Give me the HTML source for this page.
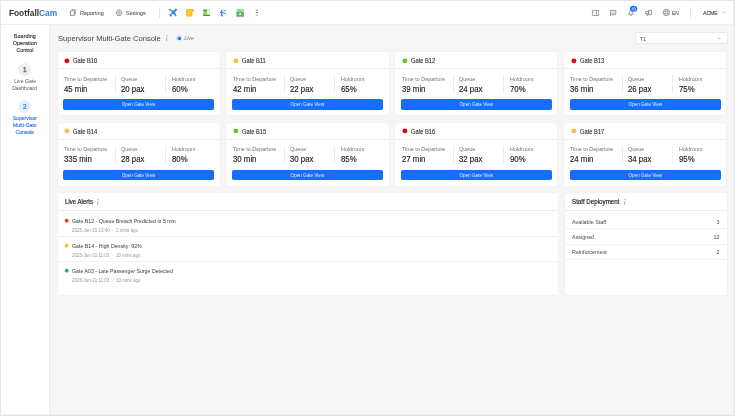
<!DOCTYPE html>
<html><head><meta charset="utf-8"><style>
html,body{margin:0;padding:0;width:735px;height:416px;overflow:hidden;background:#f6f6f6}
body{position:relative;font-family:"Liberation Sans",sans-serif}
#w{position:absolute;left:0;top:0;width:735px;height:416px;will-change:transform}
.t{position:absolute;white-space:nowrap}
.r{position:absolute;display:block}
</style></head><body><div id="w">
<div class="r" style="left:0.00px;top:0.00px;width:735.00px;height:416.00px;background:#f6f6f6"></div>
<div class="r" style="left:0.00px;top:0.00px;width:735.00px;height:25.00px;background:#fff;border-bottom:1px solid #eeeeee;box-sizing:border-box"></div>
<div class="r" style="left:0.00px;top:25.00px;width:50.00px;height:391.00px;background:#fff;border-right:1px solid #ededed;box-sizing:border-box"></div>
<div class="t" style="left:8.90px;top:9.32px;font-size:8.36px;line-height:8.36px;font-weight:700;color:#333;">Footfall<span style="color:#3b78de">Cam</span></div>
<svg class="r" style="left:0;top:0;width:735px;height:24px" viewBox="0 0 735 24"><path d="M71.6 9.7 H75.3 V14.6" fill="none" stroke="#7a7a7a" stroke-width="0.75"/><rect x="70.4" y="10.9" width="4.0" height="4.7" rx="0.5" fill="none" stroke="#7a7a7a" stroke-width="0.8"/><path d="M117.6 10.1 L120.6 10.1 L122.0 12.9 L120.6 15.6 L117.6 15.6 L116.2 12.9 Z" fill="none" stroke="#7a7a7a" stroke-width="0.75" stroke-linejoin="round"/><circle cx="119.1" cy="12.9" r="1.2" fill="none" stroke="#7a7a7a" stroke-width="0.7"/><path d="M172.9 12.8 L176.0 9.6" stroke="#3d7ef2" stroke-width="2.0" stroke-linecap="round"/><path d="M172.9 12.8 L170.6 15.2" stroke="#3d7ef2" stroke-width="1.5" stroke-linecap="round"/><path d="M169.7 14.6 L171.2 16.1" stroke="#3d7ef2" stroke-width="1.1" stroke-linecap="round"/><path d="M169.8 9.6 L172.6 11.2 L175.9 15.9 L174.2 12.4 Z" fill="#3d7ef2" stroke="#3d7ef2" stroke-width="1.3" stroke-linejoin="round"/><rect x="186.0" y="8.9" width="6.5" height="7.7" rx="0.5" fill="#fbbd1f"/><rect x="192.3" y="9.0" width="1.2" height="2.8" fill="#f7930f"/><path d="M187.6 11.6 L188.8 11.0 L189.8 11.5 L191.0 10.9 M187.6 14.1 L188.8 13.4 L189.8 13.9 L191.0 13.2" fill="none" stroke="#fde6a6" stroke-width="0.75"/><rect x="203.1" y="9.3" width="6.9" height="6.7" rx="0.4" fill="#9fd06a"/><rect x="207.0" y="9.3" width="3.0" height="5.0" fill="#dff0cf"/><rect x="203.6" y="9.9" width="3.4" height="1.3" fill="#2aa24c"/><rect x="203.1" y="14.9" width="6.9" height="1.1" fill="#28a84f"/><rect x="207.6" y="12.0" width="1.6" height="2.2" fill="#f5fbef"/><rect x="222.2" y="8.7" width="4.8" height="7.0" fill="#eeeeee"/><path d="M221.6 10.0 V15.3 Q221.6 15.8 222.3 15.8 H223.0" fill="none" stroke="#3d7ef2" stroke-width="1.3"/><path d="M220.0 12.4 H223.3" fill="none" stroke="#3d7ef2" stroke-width="1.2"/><path d="M223.4 13.3 H225.6" fill="none" stroke="#3d7ef2" stroke-width="0.9"/><path d="M223.4 9.9 H225.6 L224.5 11.3 Z" fill="#42b35f"/><rect x="236.4" y="10.4" width="7.5" height="6.4" rx="0.6" fill="#55bb57"/><path d="M236.8 10.0 L238.4 9.1 L240.1 10.0 L241.8 9.1 L243.5 10.0" fill="none" stroke="#4cb64f" stroke-width="0.8"/><rect x="236.4" y="11.3" width="7.5" height="0.5" fill="#dff1df"/><rect x="239.3" y="13.1" width="1.8" height="1.8" fill="#ffffff"/><rect x="255.8" y="9.8" width="2.3" height="1.0" fill="#8a8a8a"/><rect x="255.8" y="12.0" width="2.3" height="1.0" fill="#8a8a8a"/><rect x="255.8" y="14.7" width="2.3" height="1.0" fill="#b0b0b0"/><rect x="592.4" y="10.3" width="6.2" height="5.2" rx="0.5" fill="none" stroke="#7a7a7a" stroke-width="0.7"/><path d="M596.6 10.3 V15.4 M593.2 12.3 H594.1" fill="none" stroke="#7a7a7a" stroke-width="0.7"/><path d="M610.5 10.4 H615.8 V14.7 H611.3 L610.5 15.7 Z" fill="none" stroke="#7a7a7a" stroke-width="0.7" stroke-linejoin="round"/><path d="M611.2 12.0 H615.1 M611.2 13.6 H615.1" fill="none" stroke="#7a7a7a" stroke-width="0.45"/><path d="M628.4 14.3 C629.3 13.5 629.2 12.4 629.3 11.6 C629.5 10.4 632.2 10.4 632.5 11.6 C632.6 12.4 632.5 13.5 633.4 14.3 Z" fill="none" stroke="#7a7a7a" stroke-width="0.7" stroke-linejoin="round"/><path d="M630.3 15.3 H631.5" fill="none" stroke="#666" stroke-width="0.8"/><ellipse cx="633.6" cy="8.8" rx="3.75" ry="3.05" fill="#1f6ef5"/><path d="M632.3 7.3 V10.3 M634.6 7.4 C636.0 7.4 636.0 10.2 634.6 10.2 C633.3 10.2 633.3 7.4 634.6 7.4" fill="none" stroke="#d6e4ff" stroke-width="0.7"/><path d="M645.6 11.3 H648.7 V13.6 H645.6 Z" fill="none" stroke="#7a7a7a" stroke-width="0.75" stroke-linejoin="round"/><rect x="648.7" y="10.3" width="2.8" height="4.4" rx="0.3" fill="none" stroke="#7a7a7a" stroke-width="0.75"/><path d="M646.4 13.7 L646.9 15.4 H647.9 V13.7" fill="none" stroke="#7a7a7a" stroke-width="0.65" stroke-linejoin="round"/><circle cx="666.4" cy="12.5" r="3.2" fill="none" stroke="#7a7a7a" stroke-width="0.7"/><ellipse cx="666.4" cy="12.5" rx="1.3" ry="3.2" fill="none" stroke="#7a7a7a" stroke-width="0.55"/><path d="M663.3 11.5 H669.5 M663.3 13.5 H669.5" fill="none" stroke="#7a7a7a" stroke-width="0.55"/><path d="M722.2 11.6 L723.6 13.0 L725.0 11.6" fill="none" stroke="#8a8a8a" stroke-width="0.6"/></svg>
<div class="t" style="left:80.10px;top:10.59px;font-size:5.80px;line-height:5.80px;font-weight:400;color:#555;transform:scaleX(0.945);transform-origin:left center;-webkit-text-stroke:0.06px currentColor;">Reporting</div>
<div class="t" style="left:126.00px;top:10.59px;font-size:5.80px;line-height:5.80px;font-weight:400;color:#555;transform:scaleX(0.940);transform-origin:left center;-webkit-text-stroke:0.06px currentColor;">Settings</div>
<div class="r" style="left:158.60px;top:6.70px;width:0.70px;height:11.60px;background:#e6e6e6"></div>
<div class="t" style="left:672.00px;top:11.10px;font-size:5.20px;line-height:5.20px;font-weight:400;color:#444;transform:scaleX(0.930);transform-origin:left center;-webkit-text-stroke:0.04px currentColor;">EN</div>
<div class="r" style="left:690.40px;top:6.90px;width:0.70px;height:11.40px;background:#e6e6e6"></div>
<div class="t" style="left:703.10px;top:11.04px;font-size:5.50px;line-height:5.50px;font-weight:400;color:#333;transform:scaleX(0.930);transform-origin:left center;-webkit-text-stroke:0.08px currentColor;">ACME</div>
<div class="t" style="left:-75.15px;width:200px;text-align:center;top:33.84px;font-size:5.50px;line-height:5.50px;font-weight:400;color:#3a3a3a;-webkit-text-stroke:0.15px currentColor;">Boarding</div>
<div class="t" style="left:-75.15px;width:200px;text-align:center;top:40.74px;font-size:5.50px;line-height:5.50px;font-weight:400;color:#3a3a3a;-webkit-text-stroke:0.15px currentColor;">Operation</div>
<div class="t" style="left:-75.00px;width:200px;text-align:center;top:47.64px;font-size:5.50px;line-height:5.50px;font-weight:400;color:#3a3a3a;transform:scaleX(0.950);transform-origin:center center;-webkit-text-stroke:0.15px currentColor;">Control</div>
<div class="r" style="left:18.30px;top:62.90px;width:13.00px;height:13.00px;background:#efefef;border-radius:50%"></div>
<div class="t" style="left:-75.20px;width:200px;text-align:center;top:66.98px;font-size:6.40px;line-height:6.40px;font-weight:400;color:#555;-webkit-text-stroke:0.25px currentColor;">1</div>
<div class="t" style="left:-74.95px;width:200px;text-align:center;top:79.08px;font-size:5.10px;line-height:5.10px;font-weight:400;color:#555;">Live Gate</div>
<div class="t" style="left:-75.35px;width:200px;text-align:center;top:85.78px;font-size:5.10px;line-height:5.10px;font-weight:400;color:#555;">Dashboard</div>
<div class="r" style="left:18.25px;top:99.90px;width:13.00px;height:13.00px;background:#e6effe;border-radius:50%"></div>
<div class="t" style="left:-75.25px;width:200px;text-align:center;top:103.88px;font-size:6.40px;line-height:6.40px;font-weight:400;color:#2b6ef0;-webkit-text-stroke:0.2px currentColor;">2</div>
<div class="t" style="left:-75.15px;width:200px;text-align:center;top:116.28px;font-size:5.10px;line-height:5.10px;font-weight:400;color:#2b6ef0;-webkit-text-stroke:0.12px currentColor;">Supervisor</div>
<div class="t" style="left:-75.15px;width:200px;text-align:center;top:123.08px;font-size:5.10px;line-height:5.10px;font-weight:400;color:#2b6ef0;-webkit-text-stroke:0.12px currentColor;">Multi-Gate</div>
<div class="t" style="left:-75.20px;width:200px;text-align:center;top:129.78px;font-size:5.10px;line-height:5.10px;font-weight:400;color:#2b6ef0;-webkit-text-stroke:0.12px currentColor;">Console</div>
<div class="t" style="left:57.70px;top:34.83px;font-size:8.00px;line-height:8.00px;font-weight:400;color:#424242;transform:scaleX(0.943);transform-origin:left center;">Supervisor Multi-Gate Console</div>
<svg class="r" style="left:163.50px;top:33.60px;width:6.00px;height:8.00px" viewBox="0 0 6 8"><circle cx="3.00" cy="1.70" r="0.70" fill="#adadad"/><path d="M2.80 3.50 L2.40 7.10" stroke="#adadad" stroke-width="1.00" fill="none"/></svg>
<div class="r" style="left:176.00px;top:34.95px;width:6.20px;height:6.20px;background:radial-gradient(circle, rgba(15,96,255,0.35) 0%, rgba(15,96,255,0.12) 60%, rgba(15,96,255,0) 100%);border-radius:50%"></div>
<div class="r" style="left:177.55px;top:36.50px;width:3.10px;height:3.10px;background:#0f60ff;border-radius:50%"></div>
<div class="t" style="left:184.20px;top:36.21px;font-size:5.30px;line-height:5.30px;font-weight:400;color:#7d7d7d;font-style:italic">Live</div>
<div class="r" style="left:635.00px;top:32.00px;width:93.00px;height:12.00px;background:#fff;border-radius:2px;border:1px solid #e9e9e9;box-sizing:border-box"></div>
<div class="t" style="left:640.10px;top:36.96px;font-size:5.60px;line-height:5.60px;font-weight:400;color:#555;transform:scaleX(0.900);transform-origin:left center;-webkit-text-stroke:0.08px currentColor;">T1</div>
<svg class="r" style="left:717.40px;top:36.60px;width:4.20px;height:3.00px" viewBox="0 0 4.2 3.0"><path d="M0.6 0.7 L2.1 2.2 L3.6 0.7" fill="none" stroke="#8f8f8f" stroke-width="0.6"/></svg>
<div class="r" style="left:57.50px;top:52.20px;width:162.10px;height:63.20px;background:#fff;border-radius:2.2px;box-shadow:0 0 0 0.5px rgba(0,0,0,0.035)"></div>
<div class="r" style="left:57.50px;top:68.10px;width:162.10px;height:0.60px;background:#ededed"></div>
<svg class="r" style="left:62.30px;top:55.60px;width:9.80px;height:9.80px" viewBox="0 0 9.80 9.80"><circle cx="4.90" cy="4.90" r="2.45" fill="#e3001b"/></svg>
<div class="t" style="left:72.70px;top:58.01px;font-size:6.60px;line-height:6.60px;font-weight:400;color:#2a2a2a;transform:scaleX(0.870);transform-origin:left center;-webkit-text-stroke:0.1px currentColor;">Gate B10</div>
<div class="t" style="left:63.60px;top:76.59px;font-size:5.80px;line-height:5.80px;font-weight:400;color:#737373;transform:scaleX(0.930);transform-origin:left center;">Time to Departure</div>
<div class="t" style="left:63.60px;top:85.66px;font-size:8.20px;line-height:8.20px;font-weight:400;color:#262626;transform:scaleX(0.955);transform-origin:left center;-webkit-text-stroke:0.17px currentColor;">45 min</div>
<div class="r" style="left:114.70px;top:75.40px;width:0.70px;height:17.40px;background:#ededed"></div>
<div class="t" style="left:121.00px;top:76.59px;font-size:5.80px;line-height:5.80px;font-weight:400;color:#737373;transform:scaleX(0.930);transform-origin:left center;">Queue</div>
<div class="t" style="left:121.00px;top:85.66px;font-size:8.20px;line-height:8.20px;font-weight:400;color:#262626;transform:scaleX(0.955);transform-origin:left center;-webkit-text-stroke:0.17px currentColor;">20 pax</div>
<div class="r" style="left:165.20px;top:75.40px;width:0.70px;height:17.40px;background:#ededed"></div>
<div class="t" style="left:172.00px;top:76.59px;font-size:5.80px;line-height:5.80px;font-weight:400;color:#737373;transform:scaleX(0.930);transform-origin:left center;">Holdroom</div>
<div class="t" style="left:172.00px;top:85.66px;font-size:8.20px;line-height:8.20px;font-weight:400;color:#262626;transform:scaleX(0.955);transform-origin:left center;-webkit-text-stroke:0.17px currentColor;">60%</div>
<div class="r" style="left:63.20px;top:99.20px;width:150.50px;height:10.60px;background:#166dff;border-radius:1.8px"></div>
<div class="t" style="left:38.45px;width:200px;text-align:center;top:103.11px;font-size:4.60px;line-height:4.60px;font-weight:400;color:rgba(255,255,255,0.88);">Open Gate View</div>
<div class="r" style="left:226.45px;top:52.20px;width:162.10px;height:63.20px;background:#fff;border-radius:2.2px;box-shadow:0 0 0 0.5px rgba(0,0,0,0.035)"></div>
<div class="r" style="left:226.45px;top:68.10px;width:162.10px;height:0.60px;background:#ededed"></div>
<svg class="r" style="left:231.25px;top:55.60px;width:9.80px;height:9.80px" viewBox="0 0 9.80 9.80"><circle cx="4.90" cy="4.90" r="2.45" fill="#f8c13b"/></svg>
<div class="t" style="left:241.65px;top:58.01px;font-size:6.60px;line-height:6.60px;font-weight:400;color:#2a2a2a;transform:scaleX(0.870);transform-origin:left center;-webkit-text-stroke:0.1px currentColor;">Gate B11</div>
<div class="t" style="left:232.55px;top:76.59px;font-size:5.80px;line-height:5.80px;font-weight:400;color:#737373;transform:scaleX(0.930);transform-origin:left center;">Time to Departure</div>
<div class="t" style="left:232.55px;top:85.66px;font-size:8.20px;line-height:8.20px;font-weight:400;color:#262626;transform:scaleX(0.955);transform-origin:left center;-webkit-text-stroke:0.17px currentColor;">42 min</div>
<div class="r" style="left:283.65px;top:75.40px;width:0.70px;height:17.40px;background:#ededed"></div>
<div class="t" style="left:289.95px;top:76.59px;font-size:5.80px;line-height:5.80px;font-weight:400;color:#737373;transform:scaleX(0.930);transform-origin:left center;">Queue</div>
<div class="t" style="left:289.95px;top:85.66px;font-size:8.20px;line-height:8.20px;font-weight:400;color:#262626;transform:scaleX(0.955);transform-origin:left center;-webkit-text-stroke:0.17px currentColor;">22 pax</div>
<div class="r" style="left:334.15px;top:75.40px;width:0.70px;height:17.40px;background:#ededed"></div>
<div class="t" style="left:340.95px;top:76.59px;font-size:5.80px;line-height:5.80px;font-weight:400;color:#737373;transform:scaleX(0.930);transform-origin:left center;">Holdroom</div>
<div class="t" style="left:340.95px;top:85.66px;font-size:8.20px;line-height:8.20px;font-weight:400;color:#262626;transform:scaleX(0.955);transform-origin:left center;-webkit-text-stroke:0.17px currentColor;">65%</div>
<div class="r" style="left:232.15px;top:99.20px;width:150.50px;height:10.60px;background:#166dff;border-radius:1.8px"></div>
<div class="t" style="left:207.40px;width:200px;text-align:center;top:103.11px;font-size:4.60px;line-height:4.60px;font-weight:400;color:rgba(255,255,255,0.88);">Open Gate View</div>
<div class="r" style="left:395.40px;top:52.20px;width:162.10px;height:63.20px;background:#fff;border-radius:2.2px;box-shadow:0 0 0 0.5px rgba(0,0,0,0.035)"></div>
<div class="r" style="left:395.40px;top:68.10px;width:162.10px;height:0.60px;background:#ededed"></div>
<svg class="r" style="left:400.20px;top:55.60px;width:9.80px;height:9.80px" viewBox="0 0 9.80 9.80"><circle cx="4.90" cy="4.90" r="2.45" fill="#63c81f"/></svg>
<div class="t" style="left:410.60px;top:58.01px;font-size:6.60px;line-height:6.60px;font-weight:400;color:#2a2a2a;transform:scaleX(0.870);transform-origin:left center;-webkit-text-stroke:0.1px currentColor;">Gate B12</div>
<div class="t" style="left:401.50px;top:76.59px;font-size:5.80px;line-height:5.80px;font-weight:400;color:#737373;transform:scaleX(0.930);transform-origin:left center;">Time to Departure</div>
<div class="t" style="left:401.50px;top:85.66px;font-size:8.20px;line-height:8.20px;font-weight:400;color:#262626;transform:scaleX(0.955);transform-origin:left center;-webkit-text-stroke:0.17px currentColor;">39 min</div>
<div class="r" style="left:452.60px;top:75.40px;width:0.70px;height:17.40px;background:#ededed"></div>
<div class="t" style="left:458.90px;top:76.59px;font-size:5.80px;line-height:5.80px;font-weight:400;color:#737373;transform:scaleX(0.930);transform-origin:left center;">Queue</div>
<div class="t" style="left:458.90px;top:85.66px;font-size:8.20px;line-height:8.20px;font-weight:400;color:#262626;transform:scaleX(0.955);transform-origin:left center;-webkit-text-stroke:0.17px currentColor;">24 pax</div>
<div class="r" style="left:503.10px;top:75.40px;width:0.70px;height:17.40px;background:#ededed"></div>
<div class="t" style="left:509.90px;top:76.59px;font-size:5.80px;line-height:5.80px;font-weight:400;color:#737373;transform:scaleX(0.930);transform-origin:left center;">Holdroom</div>
<div class="t" style="left:509.90px;top:85.66px;font-size:8.20px;line-height:8.20px;font-weight:400;color:#262626;transform:scaleX(0.955);transform-origin:left center;-webkit-text-stroke:0.17px currentColor;">70%</div>
<div class="r" style="left:401.10px;top:99.20px;width:150.50px;height:10.60px;background:#166dff;border-radius:1.8px"></div>
<div class="t" style="left:376.35px;width:200px;text-align:center;top:103.11px;font-size:4.60px;line-height:4.60px;font-weight:400;color:rgba(255,255,255,0.88);">Open Gate View</div>
<div class="r" style="left:564.35px;top:52.20px;width:162.10px;height:63.20px;background:#fff;border-radius:2.2px;box-shadow:0 0 0 0.5px rgba(0,0,0,0.035)"></div>
<div class="r" style="left:564.35px;top:68.10px;width:162.10px;height:0.60px;background:#ededed"></div>
<svg class="r" style="left:569.15px;top:55.60px;width:9.80px;height:9.80px" viewBox="0 0 9.80 9.80"><circle cx="4.90" cy="4.90" r="2.45" fill="#e3001b"/></svg>
<div class="t" style="left:579.55px;top:58.01px;font-size:6.60px;line-height:6.60px;font-weight:400;color:#2a2a2a;transform:scaleX(0.870);transform-origin:left center;-webkit-text-stroke:0.1px currentColor;">Gate B13</div>
<div class="t" style="left:570.45px;top:76.59px;font-size:5.80px;line-height:5.80px;font-weight:400;color:#737373;transform:scaleX(0.930);transform-origin:left center;">Time to Departure</div>
<div class="t" style="left:570.45px;top:85.66px;font-size:8.20px;line-height:8.20px;font-weight:400;color:#262626;transform:scaleX(0.955);transform-origin:left center;-webkit-text-stroke:0.17px currentColor;">36 min</div>
<div class="r" style="left:621.55px;top:75.40px;width:0.70px;height:17.40px;background:#ededed"></div>
<div class="t" style="left:627.85px;top:76.59px;font-size:5.80px;line-height:5.80px;font-weight:400;color:#737373;transform:scaleX(0.930);transform-origin:left center;">Queue</div>
<div class="t" style="left:627.85px;top:85.66px;font-size:8.20px;line-height:8.20px;font-weight:400;color:#262626;transform:scaleX(0.955);transform-origin:left center;-webkit-text-stroke:0.17px currentColor;">26 pax</div>
<div class="r" style="left:672.05px;top:75.40px;width:0.70px;height:17.40px;background:#ededed"></div>
<div class="t" style="left:678.85px;top:76.59px;font-size:5.80px;line-height:5.80px;font-weight:400;color:#737373;transform:scaleX(0.930);transform-origin:left center;">Holdroom</div>
<div class="t" style="left:678.85px;top:85.66px;font-size:8.20px;line-height:8.20px;font-weight:400;color:#262626;transform:scaleX(0.955);transform-origin:left center;-webkit-text-stroke:0.17px currentColor;">75%</div>
<div class="r" style="left:570.05px;top:99.20px;width:150.50px;height:10.60px;background:#166dff;border-radius:1.8px"></div>
<div class="t" style="left:545.30px;width:200px;text-align:center;top:103.11px;font-size:4.60px;line-height:4.60px;font-weight:400;color:rgba(255,255,255,0.88);">Open Gate View</div>
<div class="r" style="left:57.50px;top:122.80px;width:162.10px;height:63.20px;background:#fff;border-radius:2.2px;box-shadow:0 0 0 0.5px rgba(0,0,0,0.035)"></div>
<div class="r" style="left:57.50px;top:138.70px;width:162.10px;height:0.60px;background:#ededed"></div>
<svg class="r" style="left:62.30px;top:126.20px;width:9.80px;height:9.80px" viewBox="0 0 9.80 9.80"><circle cx="4.90" cy="4.90" r="2.45" fill="#f8c13b"/></svg>
<div class="t" style="left:72.70px;top:128.61px;font-size:6.60px;line-height:6.60px;font-weight:400;color:#2a2a2a;transform:scaleX(0.870);transform-origin:left center;-webkit-text-stroke:0.1px currentColor;">Gate B14</div>
<div class="t" style="left:63.60px;top:147.19px;font-size:5.80px;line-height:5.80px;font-weight:400;color:#737373;transform:scaleX(0.930);transform-origin:left center;">Time to Departure</div>
<div class="t" style="left:63.60px;top:156.26px;font-size:8.20px;line-height:8.20px;font-weight:400;color:#262626;transform:scaleX(0.955);transform-origin:left center;-webkit-text-stroke:0.17px currentColor;">335 min</div>
<div class="r" style="left:114.70px;top:146.00px;width:0.70px;height:17.40px;background:#ededed"></div>
<div class="t" style="left:121.00px;top:147.19px;font-size:5.80px;line-height:5.80px;font-weight:400;color:#737373;transform:scaleX(0.930);transform-origin:left center;">Queue</div>
<div class="t" style="left:121.00px;top:156.26px;font-size:8.20px;line-height:8.20px;font-weight:400;color:#262626;transform:scaleX(0.955);transform-origin:left center;-webkit-text-stroke:0.17px currentColor;">28 pax</div>
<div class="r" style="left:165.20px;top:146.00px;width:0.70px;height:17.40px;background:#ededed"></div>
<div class="t" style="left:172.00px;top:147.19px;font-size:5.80px;line-height:5.80px;font-weight:400;color:#737373;transform:scaleX(0.930);transform-origin:left center;">Holdroom</div>
<div class="t" style="left:172.00px;top:156.26px;font-size:8.20px;line-height:8.20px;font-weight:400;color:#262626;transform:scaleX(0.955);transform-origin:left center;-webkit-text-stroke:0.17px currentColor;">80%</div>
<div class="r" style="left:63.20px;top:169.80px;width:150.50px;height:10.60px;background:#166dff;border-radius:1.8px"></div>
<div class="t" style="left:38.45px;width:200px;text-align:center;top:173.71px;font-size:4.60px;line-height:4.60px;font-weight:400;color:rgba(255,255,255,0.88);">Open Gate View</div>
<div class="r" style="left:226.45px;top:122.80px;width:162.10px;height:63.20px;background:#fff;border-radius:2.2px;box-shadow:0 0 0 0.5px rgba(0,0,0,0.035)"></div>
<div class="r" style="left:226.45px;top:138.70px;width:162.10px;height:0.60px;background:#ededed"></div>
<svg class="r" style="left:231.25px;top:126.20px;width:9.80px;height:9.80px" viewBox="0 0 9.80 9.80"><circle cx="4.90" cy="4.90" r="2.45" fill="#63c81f"/></svg>
<div class="t" style="left:241.65px;top:128.61px;font-size:6.60px;line-height:6.60px;font-weight:400;color:#2a2a2a;transform:scaleX(0.870);transform-origin:left center;-webkit-text-stroke:0.1px currentColor;">Gate B15</div>
<div class="t" style="left:232.55px;top:147.19px;font-size:5.80px;line-height:5.80px;font-weight:400;color:#737373;transform:scaleX(0.930);transform-origin:left center;">Time to Departure</div>
<div class="t" style="left:232.55px;top:156.26px;font-size:8.20px;line-height:8.20px;font-weight:400;color:#262626;transform:scaleX(0.955);transform-origin:left center;-webkit-text-stroke:0.17px currentColor;">30 min</div>
<div class="r" style="left:283.65px;top:146.00px;width:0.70px;height:17.40px;background:#ededed"></div>
<div class="t" style="left:289.95px;top:147.19px;font-size:5.80px;line-height:5.80px;font-weight:400;color:#737373;transform:scaleX(0.930);transform-origin:left center;">Queue</div>
<div class="t" style="left:289.95px;top:156.26px;font-size:8.20px;line-height:8.20px;font-weight:400;color:#262626;transform:scaleX(0.955);transform-origin:left center;-webkit-text-stroke:0.17px currentColor;">30 pax</div>
<div class="r" style="left:334.15px;top:146.00px;width:0.70px;height:17.40px;background:#ededed"></div>
<div class="t" style="left:340.95px;top:147.19px;font-size:5.80px;line-height:5.80px;font-weight:400;color:#737373;transform:scaleX(0.930);transform-origin:left center;">Holdroom</div>
<div class="t" style="left:340.95px;top:156.26px;font-size:8.20px;line-height:8.20px;font-weight:400;color:#262626;transform:scaleX(0.955);transform-origin:left center;-webkit-text-stroke:0.17px currentColor;">85%</div>
<div class="r" style="left:232.15px;top:169.80px;width:150.50px;height:10.60px;background:#166dff;border-radius:1.8px"></div>
<div class="t" style="left:207.40px;width:200px;text-align:center;top:173.71px;font-size:4.60px;line-height:4.60px;font-weight:400;color:rgba(255,255,255,0.88);">Open Gate View</div>
<div class="r" style="left:395.40px;top:122.80px;width:162.10px;height:63.20px;background:#fff;border-radius:2.2px;box-shadow:0 0 0 0.5px rgba(0,0,0,0.035)"></div>
<div class="r" style="left:395.40px;top:138.70px;width:162.10px;height:0.60px;background:#ededed"></div>
<svg class="r" style="left:400.20px;top:126.20px;width:9.80px;height:9.80px" viewBox="0 0 9.80 9.80"><circle cx="4.90" cy="4.90" r="2.45" fill="#e3001b"/></svg>
<div class="t" style="left:410.60px;top:128.61px;font-size:6.60px;line-height:6.60px;font-weight:400;color:#2a2a2a;transform:scaleX(0.870);transform-origin:left center;-webkit-text-stroke:0.1px currentColor;">Gate B16</div>
<div class="t" style="left:401.50px;top:147.19px;font-size:5.80px;line-height:5.80px;font-weight:400;color:#737373;transform:scaleX(0.930);transform-origin:left center;">Time to Departure</div>
<div class="t" style="left:401.50px;top:156.26px;font-size:8.20px;line-height:8.20px;font-weight:400;color:#262626;transform:scaleX(0.955);transform-origin:left center;-webkit-text-stroke:0.17px currentColor;">27 min</div>
<div class="r" style="left:452.60px;top:146.00px;width:0.70px;height:17.40px;background:#ededed"></div>
<div class="t" style="left:458.90px;top:147.19px;font-size:5.80px;line-height:5.80px;font-weight:400;color:#737373;transform:scaleX(0.930);transform-origin:left center;">Queue</div>
<div class="t" style="left:458.90px;top:156.26px;font-size:8.20px;line-height:8.20px;font-weight:400;color:#262626;transform:scaleX(0.955);transform-origin:left center;-webkit-text-stroke:0.17px currentColor;">32 pax</div>
<div class="r" style="left:503.10px;top:146.00px;width:0.70px;height:17.40px;background:#ededed"></div>
<div class="t" style="left:509.90px;top:147.19px;font-size:5.80px;line-height:5.80px;font-weight:400;color:#737373;transform:scaleX(0.930);transform-origin:left center;">Holdroom</div>
<div class="t" style="left:509.90px;top:156.26px;font-size:8.20px;line-height:8.20px;font-weight:400;color:#262626;transform:scaleX(0.955);transform-origin:left center;-webkit-text-stroke:0.17px currentColor;">90%</div>
<div class="r" style="left:401.10px;top:169.80px;width:150.50px;height:10.60px;background:#166dff;border-radius:1.8px"></div>
<div class="t" style="left:376.35px;width:200px;text-align:center;top:173.71px;font-size:4.60px;line-height:4.60px;font-weight:400;color:rgba(255,255,255,0.88);">Open Gate View</div>
<div class="r" style="left:564.35px;top:122.80px;width:162.10px;height:63.20px;background:#fff;border-radius:2.2px;box-shadow:0 0 0 0.5px rgba(0,0,0,0.035)"></div>
<div class="r" style="left:564.35px;top:138.70px;width:162.10px;height:0.60px;background:#ededed"></div>
<svg class="r" style="left:569.15px;top:126.20px;width:9.80px;height:9.80px" viewBox="0 0 9.80 9.80"><circle cx="4.90" cy="4.90" r="2.45" fill="#f8c13b"/></svg>
<div class="t" style="left:579.55px;top:128.61px;font-size:6.60px;line-height:6.60px;font-weight:400;color:#2a2a2a;transform:scaleX(0.870);transform-origin:left center;-webkit-text-stroke:0.1px currentColor;">Gate B17</div>
<div class="t" style="left:570.45px;top:147.19px;font-size:5.80px;line-height:5.80px;font-weight:400;color:#737373;transform:scaleX(0.930);transform-origin:left center;">Time to Departure</div>
<div class="t" style="left:570.45px;top:156.26px;font-size:8.20px;line-height:8.20px;font-weight:400;color:#262626;transform:scaleX(0.955);transform-origin:left center;-webkit-text-stroke:0.17px currentColor;">24 min</div>
<div class="r" style="left:621.55px;top:146.00px;width:0.70px;height:17.40px;background:#ededed"></div>
<div class="t" style="left:627.85px;top:147.19px;font-size:5.80px;line-height:5.80px;font-weight:400;color:#737373;transform:scaleX(0.930);transform-origin:left center;">Queue</div>
<div class="t" style="left:627.85px;top:156.26px;font-size:8.20px;line-height:8.20px;font-weight:400;color:#262626;transform:scaleX(0.955);transform-origin:left center;-webkit-text-stroke:0.17px currentColor;">34 pax</div>
<div class="r" style="left:672.05px;top:146.00px;width:0.70px;height:17.40px;background:#ededed"></div>
<div class="t" style="left:678.85px;top:147.19px;font-size:5.80px;line-height:5.80px;font-weight:400;color:#737373;transform:scaleX(0.930);transform-origin:left center;">Holdroom</div>
<div class="t" style="left:678.85px;top:156.26px;font-size:8.20px;line-height:8.20px;font-weight:400;color:#262626;transform:scaleX(0.955);transform-origin:left center;-webkit-text-stroke:0.17px currentColor;">95%</div>
<div class="r" style="left:570.05px;top:169.80px;width:150.50px;height:10.60px;background:#166dff;border-radius:1.8px"></div>
<div class="t" style="left:545.30px;width:200px;text-align:center;top:173.71px;font-size:4.60px;line-height:4.60px;font-weight:400;color:rgba(255,255,255,0.88);">Open Gate View</div>
<div class="r" style="left:57.50px;top:192.50px;width:500.60px;height:102.00px;background:#fff;border-radius:2.2px;box-shadow:0 0 0 0.5px rgba(0,0,0,0.035)"></div>
<div class="r" style="left:57.50px;top:210.10px;width:500.60px;height:0.60px;background:#ededed"></div>
<div class="t" style="left:65.10px;top:199.28px;font-size:6.40px;line-height:6.40px;font-weight:400;color:#262626;transform:scaleX(0.950);transform-origin:left center;-webkit-text-stroke:0.18px currentColor;">Live Alerts</div>
<svg class="r" style="left:95.40px;top:197.50px;width:6.00px;height:8.00px" viewBox="0 0 6 8"><circle cx="3.00" cy="1.73" r="0.63" fill="#a0a0a0"/><path d="M2.82 3.35 L2.46 6.59" stroke="#a0a0a0" stroke-width="0.90" fill="none"/></svg>
<svg class="r" style="left:62.90px;top:216.55px;width:7.40px;height:7.40px" viewBox="0 0 7.40 7.40"><circle cx="3.70" cy="3.70" r="1.85" fill="#f5302a"/></svg>
<div class="t" style="left:72.00px;top:218.74px;font-size:5.50px;line-height:5.50px;font-weight:400;color:#3a3a3a;transform:scaleX(0.950);transform-origin:left center;">Gate B12 - Queue Breach Predicted in 5 min</div>
<div class="t" style="left:71.90px;top:228.69px;font-size:4.50px;line-height:4.50px;font-weight:400;color:#999;">2025-Jun-31 13:40</div>
<div class="t" style="left:112.00px;top:228.69px;font-size:4.50px;line-height:4.50px;font-weight:400;color:#aaa;">·</div>
<div class="t" style="left:116.00px;top:228.69px;font-size:4.50px;line-height:4.50px;font-weight:400;color:#999;">2 mins ago</div>
<div class="r" style="left:57.50px;top:235.80px;width:500.60px;height:0.60px;background:#f0f0f0"></div>
<svg class="r" style="left:62.90px;top:241.90px;width:7.40px;height:7.40px" viewBox="0 0 7.40 7.40"><circle cx="3.70" cy="3.70" r="1.85" fill="#fbc233"/></svg>
<div class="t" style="left:72.00px;top:244.09px;font-size:5.50px;line-height:5.50px;font-weight:400;color:#3a3a3a;transform:scaleX(0.950);transform-origin:left center;">Gate B14 - High Density: 92%</div>
<div class="t" style="left:71.90px;top:254.04px;font-size:4.50px;line-height:4.50px;font-weight:400;color:#999;">2025-Jun-31 11:03</div>
<div class="t" style="left:112.00px;top:254.04px;font-size:4.50px;line-height:4.50px;font-weight:400;color:#aaa;">·</div>
<div class="t" style="left:116.00px;top:254.04px;font-size:4.50px;line-height:4.50px;font-weight:400;color:#999;">10 mins ago</div>
<div class="r" style="left:57.50px;top:261.15px;width:500.60px;height:0.60px;background:#f0f0f0"></div>
<svg class="r" style="left:62.90px;top:267.25px;width:7.40px;height:7.40px" viewBox="0 0 7.40 7.40"><circle cx="3.70" cy="3.70" r="1.85" fill="#1bb089"/></svg>
<div class="t" style="left:72.00px;top:269.44px;font-size:5.50px;line-height:5.50px;font-weight:400;color:#3a3a3a;transform:scaleX(0.950);transform-origin:left center;">Gate A03 - Late Passenger Surge Detected</div>
<div class="t" style="left:71.90px;top:279.39px;font-size:4.50px;line-height:4.50px;font-weight:400;color:#999;">2025-Jun-31 11:03</div>
<div class="t" style="left:112.00px;top:279.39px;font-size:4.50px;line-height:4.50px;font-weight:400;color:#aaa;">·</div>
<div class="t" style="left:116.00px;top:279.39px;font-size:4.50px;line-height:4.50px;font-weight:400;color:#999;">10 mins ago</div>
<div class="r" style="left:564.90px;top:192.50px;width:162.30px;height:102.00px;background:#fff;border-radius:2.2px;box-shadow:0 0 0 0.5px rgba(0,0,0,0.035)"></div>
<div class="r" style="left:564.90px;top:210.10px;width:162.30px;height:0.60px;background:#ededed"></div>
<div class="t" style="left:572.20px;top:199.08px;font-size:6.40px;line-height:6.40px;font-weight:400;color:#262626;transform:scaleX(0.970);transform-origin:left center;-webkit-text-stroke:0.18px currentColor;">Staff Deployment</div>
<svg class="r" style="left:622.10px;top:197.50px;width:6.00px;height:8.00px" viewBox="0 0 6 8"><circle cx="3.00" cy="1.73" r="0.63" fill="#a0a0a0"/><path d="M2.82 3.35 L2.46 6.59" stroke="#a0a0a0" stroke-width="0.90" fill="none"/></svg>
<div class="t" style="left:572.10px;top:219.67px;font-size:5.35px;line-height:5.35px;font-weight:400;color:#444;">Available Staff</div>
<div class="t" style="right:15.50px;top:219.67px;font-size:5.35px;line-height:5.35px;font-weight:400;color:#444;">3</div>
<div class="r" style="left:564.90px;top:228.40px;width:162.30px;height:0.60px;background:#f2f2f2"></div>
<div class="t" style="left:572.10px;top:234.77px;font-size:5.35px;line-height:5.35px;font-weight:400;color:#444;">Assigned</div>
<div class="t" style="right:15.50px;top:234.77px;font-size:5.35px;line-height:5.35px;font-weight:400;color:#444;">12</div>
<div class="r" style="left:564.90px;top:243.50px;width:162.30px;height:0.60px;background:#f2f2f2"></div>
<div class="t" style="left:572.10px;top:249.87px;font-size:5.35px;line-height:5.35px;font-weight:400;color:#444;">Reinforcement</div>
<div class="t" style="right:15.50px;top:249.87px;font-size:5.35px;line-height:5.35px;font-weight:400;color:#444;">2</div>
<div class="r" style="left:564.90px;top:258.60px;width:162.30px;height:0.60px;background:#f2f2f2"></div>
<div class="r" style="left:0.00px;top:0.00px;width:735.00px;height:416.00px;border-left:1px solid #e6e6e6;border-top:1px solid #e6e6e6;border-right:1px solid #e4e4e4;border-bottom:1px solid #e4e4e4;box-sizing:border-box"></div>
<div class="r" style="left:733.00px;top:1.00px;width:1.00px;height:414.00px;background:#f0f0f0"></div>
<div class="r" style="left:1.00px;top:414.00px;width:732.00px;height:1.00px;background:#f0f0f0"></div>
</div></body></html>
